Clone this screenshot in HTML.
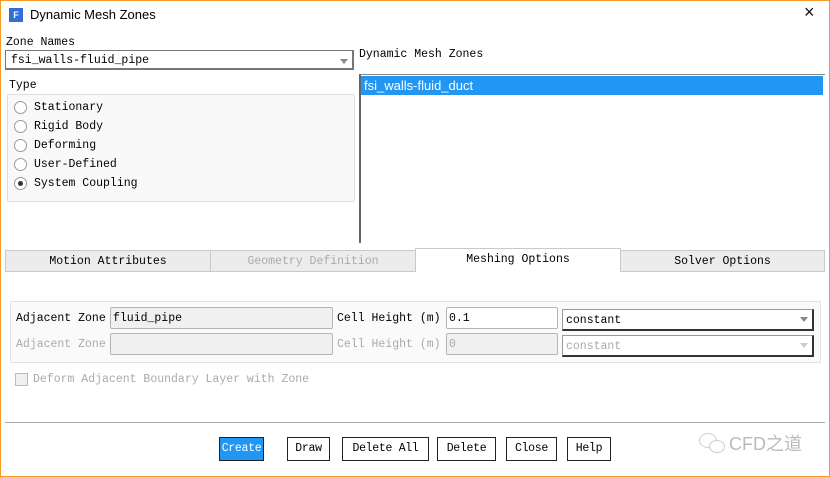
<!DOCTYPE html>
<html><head><meta charset="utf-8"><style>
*{box-sizing:border-box;margin:0;padding:0}
body{width:830px;height:477px;background:#fff;position:relative;overflow:hidden;font-family:"Liberation Mono","Noto Sans CJK SC",monospace;font-size:11.5px;color:#000}
.a{position:absolute;white-space:nowrap}
.win{left:0;top:0;width:830px;height:477px;border:1px solid #f59a23;}
.rad{width:13px;height:13px;border:1px solid #9a9a9a;border-radius:50%;background:#fff}
.fld{border:1px solid #b5b5b5;border-radius:2px;height:22px;padding:4px 2px;}
.btn{height:24px;border:1px solid #222;background:#fff;text-align:center;line-height:22px;font-size:11.5px;letter-spacing:-0.3px}
.tab{top:250px;height:22px;border:1px solid #c9c9c9;background:#ececec;text-align:center;line-height:21px}
.combo{height:22px;border:1px solid #999;border-right:2px solid #333;border-bottom:2px solid #333;background:#fff;padding:4px 3px}
.arr{position:absolute;right:4px;top:7px;width:0;height:0;border-left:4px solid transparent;border-right:4px solid transparent;border-top:5px solid #888}
</style></head><body>
<div class="a win"></div>
<div class="a" style="left:9px;top:8px;width:14px;height:14px;background:#2f6fd6;color:#fff;font:bold 9px 'Liberation Sans';text-align:center;line-height:14px">F</div>
<div class="a" style="left:30px;top:7px;font:13px 'Liberation Sans',sans-serif">Dynamic Mesh Zones</div>
<div class="a" style="left:804px;top:2px;font:18px 'Liberation Sans';color:#111">×</div>

<div class="a" style="left:6px;top:36px">Zone Names</div>
<div class="a combo" style="left:5px;top:50px;width:349px;height:20px;padding:3px 5px;border-color:#777">fsi_walls-fluid_pipe<span class="arr" style="top:8px"></span></div>
<div class="a" style="left:9px;top:79px">Type</div>
<div class="a" style="left:7px;top:94px;width:348px;height:108px;border:1px solid #ddd;border-radius:2px;background:#f9f9f9"></div>
<div class="a rad" style="left:14px;top:101px"></div><div class="a" style="left:34px;top:101px">Stationary</div>
<div class="a rad" style="left:14px;top:120px"></div><div class="a" style="left:34px;top:120px">Rigid Body</div>
<div class="a rad" style="left:14px;top:139px"></div><div class="a" style="left:34px;top:139px">Deforming</div>
<div class="a rad" style="left:14px;top:158px"></div><div class="a" style="left:34px;top:158px">User-Defined</div>
<div class="a rad" style="left:14px;top:177px"></div><div class="a" style="left:18px;top:181px;width:5px;height:5px;border-radius:50%;background:#333"></div><div class="a" style="left:34px;top:177px">System Coupling</div>

<div class="a" style="left:359px;top:48px">Dynamic Mesh Zones</div>
<div class="a" style="left:359px;top:74px;width:466px;height:169px;border-left:2px solid #666;border-top:1px solid #888"></div>
<div class="a" style="left:361px;top:76px;width:462px;height:19px;background:#2196f3;color:#fff;font:13px 'Liberation Sans',sans-serif;padding:2px 3px">fsi_walls-fluid_duct</div>

<div class="a tab" style="left:5px;width:206px;line-height:22px">Motion Attributes</div>
<div class="a tab" style="left:210px;width:206px;color:#aaa;line-height:22px">Geometry Definition</div>
<div class="a tab" style="left:415px;top:248px;width:206px;height:24px;background:#fff;border-bottom:none">Meshing Options</div>
<div class="a tab" style="left:620px;width:205px;line-height:22px">Solver Options</div>

<div class="a" style="left:10px;top:301px;width:811px;height:62px;border:1px solid #e3e3e3;background:#fafafa"></div>
<div class="a" style="left:16px;top:312px">Adjacent Zone</div>
<div class="a fld" style="left:110px;top:307px;width:223px;background:#f0f0f0">fluid_pipe</div>
<div class="a" style="left:337px;top:312px">Cell Height (m)</div>
<div class="a fld" style="left:446px;top:307px;width:112px;background:#fff">0.1</div>
<div class="a combo" style="left:562px;top:309px;width:252px">constant<span class="arr"></span></div>
<div class="a" style="left:16px;top:338px;color:#aaa">Adjacent Zone</div>
<div class="a fld" style="left:110px;top:333px;width:223px;background:#f0f0f0"></div>
<div class="a" style="left:337px;top:338px;color:#aaa">Cell Height (m)</div>
<div class="a fld" style="left:446px;top:333px;width:112px;background:#f0f0f0;color:#aaa">0</div>
<div class="a combo" style="left:562px;top:335px;width:252px;color:#aaa">constant<span class="arr" style="border-top-color:#ccc"></span></div>

<div class="a" style="left:15px;top:373px;width:13px;height:13px;border:1px solid #bbb;background:#f0f0f0"></div>
<div class="a" style="left:33px;top:373px;color:#aaa">Deform Adjacent Boundary Layer with Zone</div>

<div class="a" style="left:5px;top:422px;width:820px;height:1px;background:#aaa"></div>
<div class="a btn" style="left:219px;top:437px;width:45px;background:#2196f3;color:#fff">Create</div>
<div class="a btn" style="left:287px;top:437px;width:43px">Draw</div>
<div class="a btn" style="left:342px;top:437px;width:87px">Delete All</div>
<div class="a btn" style="left:437px;top:437px;width:59px">Delete</div>
<div class="a btn" style="left:506px;top:437px;width:51px">Close</div>
<div class="a btn" style="left:567px;top:437px;width:44px">Help</div>
<div class="a" style="left:699px;top:433px;width:18px;height:15px;border:1px solid #ccc;border-radius:50%"></div>
<div class="a" style="left:709px;top:440px;width:16px;height:13px;border:1px solid #ccc;border-radius:50%;background:#fff"></div>
<div class="a" style="left:729px;top:430px;font:18px 'Liberation Sans','Noto Sans CJK SC',sans-serif;color:#bbb">CFD之道</div>
</body></html>
